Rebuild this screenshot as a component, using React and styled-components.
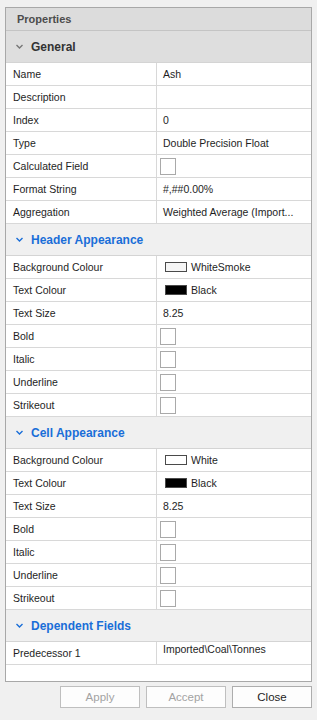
import React from 'react';
import styled, { createGlobalStyle } from 'styled-components';

const GlobalStyle = createGlobalStyle`
  html, body {
    margin: 0;
    padding: 0;
    background: #f0f0f0;
  }
  body {
    font-family: "Liberation Sans", Arial, sans-serif;
    font-size: 10.5px;
    color: #1e1e1e;
  }
`;

const Page = styled.div`
  width: 317px;
  height: 720px;
  box-sizing: border-box;
  padding: 7px 5px 0 5px;
  display: flex;
  flex-direction: column;
`;

const Panel = styled.div`
  height: 675px;
  box-sizing: border-box;
  border: 1px solid #a8a8a8;
  background: #f0f0f0;
  display: flex;
  flex-direction: column;
`;

const TitleBar = styled.div`
  height: 22px;
  flex: none;
  border-bottom: 1px solid #c4c4c4;
  background: #dcdcdc;
  display: flex;
  align-items: center;
  padding-left: 11px;
  font-weight: bold;
  font-size: 11px;
  color: #4c4c4c;
`;

const Grid = styled.div`
  flex: 1;
  background: #fff;
  display: flex;
  flex-direction: column;
`;

const GroupHeader = styled.div`
  height: 31px;
  flex: none;
  border-bottom: 1px solid #d4d4d4;
  background: ${p => (p.active ? '#dedede' : '#f0f0f0')};
  color: ${p => (p.active ? '#333' : '#1a6ed8')};
  display: flex;
  align-items: center;
  padding-left: 10px;
  gap: 8px;
  font-weight: bold;
  font-size: 12px;
`;

const Row = styled.div`
  height: 22px;
  flex: none;
  display: grid;
  grid-template-columns: 151px 1fr;
  border-bottom: 1px solid #d8d8d8;
`;

const Label = styled.div`
  border-right: 1px solid #d8d8d8;
  padding-left: 7px;
  display: flex;
  align-items: center;
  white-space: nowrap;
  overflow: hidden;
`;

const Value = styled.div`
  padding-left: ${p => (p.check ? '2px' : '6px')};
  padding-right: 4px;
  padding-top: ${p => (p.top ? '1px' : '0')};
  display: flex;
  align-items: ${p => (p.top ? 'flex-start' : 'center')};
  gap: 4px;
  min-width: 0;
`;

const Text = styled.span`
  white-space: nowrap;
`;

const CheckBox = styled.span`
  width: 14px;
  height: 15px;
  margin-left: 1px;
  border: 1px solid #a9a9a9;
  background: #fff;
  flex: none;
`;

const Swatch = styled.span`
  width: 20px;
  height: 8px;
  border: 1px solid #4a4a4a;
  background: ${p => p.color};
  flex: none;
  margin-left: 2px;
`;

const Filler = styled.div`
  flex: 1;
`;

const Buttons = styled.div`
  display: flex;
  justify-content: flex-end;
  gap: 6px;
  margin-top: 4px;
`;

const Button = styled.button`
  width: 80px;
  height: 22px;
  box-sizing: border-box;
  border: 1px solid ${p => (p.disabled ? '#bfbfbf' : '#adadad')};
  background: #fdfdfd;
  font-family: "Liberation Sans", Arial, sans-serif;
  font-size: 11.5px;
  color: ${p => (p.disabled ? '#a3a3a3' : '#1e1e1e')};
  padding: 0;
`;

const Chevron = ({ color }) => (
  <svg width="7" height="5" viewBox="0 0 7 5">
    <path d="M0.5 1 L3.5 4 L6.5 1" fill="none" stroke={color} strokeWidth="1.4" />
  </svg>
);

const groups = [
  {
    title: 'General',
    active: true,
    rows: [
      ['Name', { text: 'Ash' }],
      ['Description', { text: '' }],
      ['Index', { text: '0' }],
      ['Type', { text: 'Double Precision Float' }],
      ['Calculated Field', { check: true }],
      ['Format String', { text: '#,##0.00%' }],
      ['Aggregation', { text: 'Weighted Average (Import...' }],
    ],
  },
  {
    title: 'Header Appearance',
    rows: [
      ['Background Colour', { swatch: '#f5f5f5', text: 'WhiteSmoke' }],
      ['Text Colour', { swatch: '#000', text: 'Black' }],
      ['Text Size', { text: '8.25' }],
      ['Bold', { check: true }],
      ['Italic', { check: true }],
      ['Underline', { check: true }],
      ['Strikeout', { check: true }],
    ],
  },
  {
    title: 'Cell Appearance',
    rows: [
      ['Background Colour', { swatch: '#fff', text: 'White' }],
      ['Text Colour', { swatch: '#000', text: 'Black' }],
      ['Text Size', { text: '8.25' }],
      ['Bold', { check: true }],
      ['Italic', { check: true }],
      ['Underline', { check: true }],
      ['Strikeout', { check: true }],
    ],
  },
  {
    title: 'Dependent Fields',
    rows: [['Predecessor 1', { text: 'Imported\\Coal\\Tonnes', top: true }]],
  },
];

export default function App() {
  return (
    <>
      <GlobalStyle />
      <Page>
        <Panel>
          <TitleBar>Properties</TitleBar>
          <Grid>
            {groups.map(g => (
              <React.Fragment key={g.title}>
                <GroupHeader active={g.active}>
                  <Chevron color={g.active ? '#777' : '#1a6ed8'} />
                  {g.title}
                </GroupHeader>
                {g.rows.map(([label, v]) => (
                  <Row key={label}>
                    <Label>{label}</Label>
                    <Value check={v.check} top={v.top}>
                      {v.check && <CheckBox />}
                      {v.swatch && <Swatch color={v.swatch} />}
                      {v.text && <Text>{v.text}</Text>}
                    </Value>
                  </Row>
                ))}
              </React.Fragment>
            ))}
            <Filler />
          </Grid>
        </Panel>
        <Buttons>
          <Button disabled>Apply</Button>
          <Button disabled>Accept</Button>
          <Button>Close</Button>
        </Buttons>
      </Page>
    </>
  );
}
